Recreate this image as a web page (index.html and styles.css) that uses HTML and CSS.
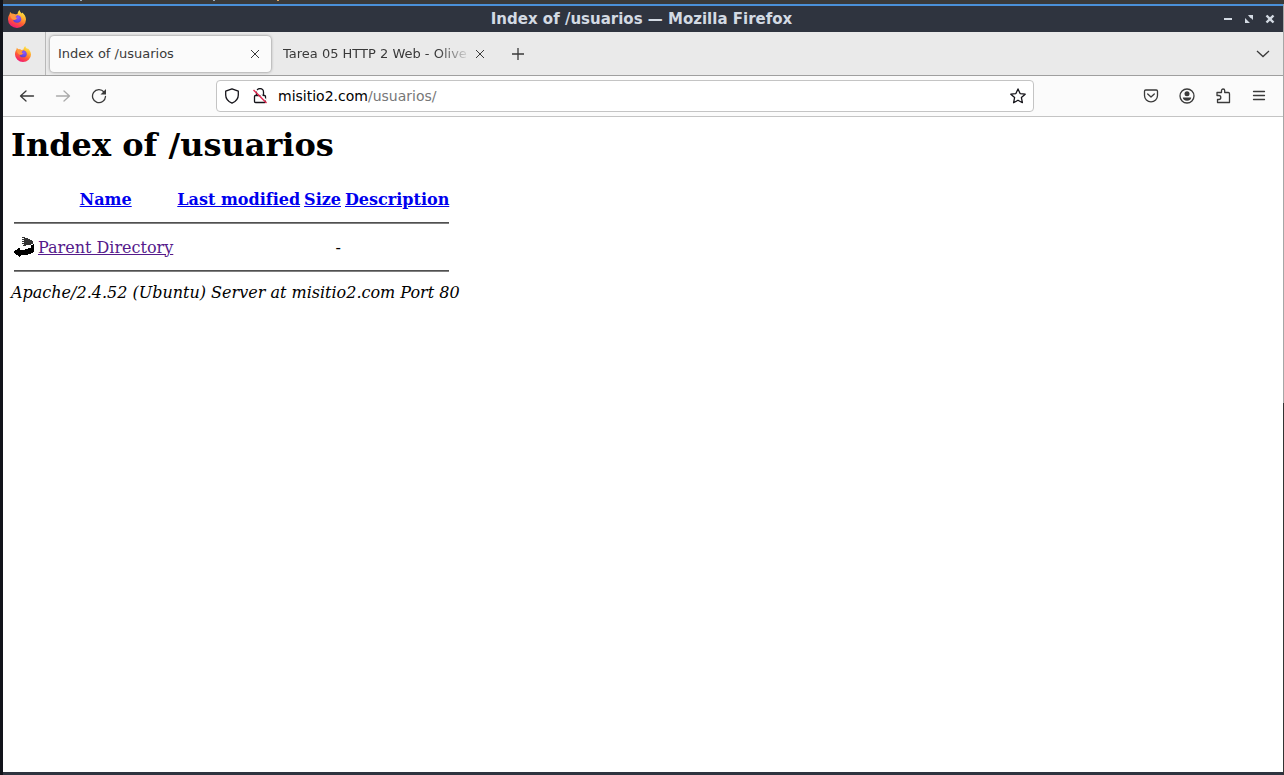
FILE: index.html
```html
<!DOCTYPE html>
<html lang="es">
<head>
<meta charset="utf-8">
<title>Index of /usuarios</title>
<link rel="stylesheet" href="styles.css">
</head>
<body>
<svg width="0" height="0" class="defs" aria-hidden="true">
  <defs>
    <linearGradient id="flame" x1="0.8" y1="0" x2="0.3" y2="1">
      <stop offset="0" stop-color="#fff44f"/><stop offset="0.35" stop-color="#ffb02e"/><stop offset="0.65" stop-color="#ff5a36"/><stop offset="1" stop-color="#f0147a"/>
    </linearGradient>
    <radialGradient id="globe" cx="0.6" cy="0.3" r="0.7">
      <stop offset="0" stop-color="#9059ff"/><stop offset="1" stop-color="#5b3fd0"/>
    </radialGradient>
    <symbol id="firefox" viewBox="0 0 18 18">
      <path fill="url(#flame)" d="M11.6 0c.2 1.600 1.200 2.400 2.200 3.400l.5-.8c2 1.700 3.700 4.200 3.700 7a9 8.400 0 0 1-18 0C0 7.200.6 5.400 1.700 4L2 2l2 1.800c1.200-.3 2.500 0 3.500.8l2-.6c.3-1.700.9-3.100 2.100-4z"/>
      <path fill="url(#globe)" d="M9.200 4.900c2.500.2 4.100 2 4.100 4.300a4.200 4 0 0 1-8.300.3c1 .7 2.300.5 3-.2l1.200-.8c-1-.3-1.800-.6-1.700-1.300 0-.9.7-1.200 1.700-2.300z"/>
      <path fill="#ff9640" d="M1.800 4.200 4 3.900c1.300-.2 2.600.1 3.500.9.800.1 1.400.1 1.800.3-.4.900-1.700 1.100-1.900 1.800.1.700 1 .9 2 .9-.3.900-1.300.9-1.700 1.400-.7.700-2.100.9-3 .3L3 8z"/>
    </symbol>
  </defs>
</svg>
<div class="desktop">
  <div class="window">
    <header class="titlebar">
      <svg class="app-icon" width="18" height="18"><use href="#firefox"/></svg>
      <span class="window-title">Index of /usuarios — Mozilla Firefox</span>
      <div class="window-buttons">
        <button aria-label="Minimize"><svg width="10" height="10" viewBox="0 0 10 10"><path fill="currentColor" d="M1 4h8v2H1z"/></svg></button>
        <button aria-label="Maximize"><svg width="10" height="10" viewBox="0 0 10 10"><path fill="currentColor" d="M4 1h5v5L7.500 4.500 6.500 4 5.500 3zM1 4l5 5H1z"/></svg></button>
        <button aria-label="Close window"><svg width="10" height="10" viewBox="0 0 10 10"><path stroke="currentColor" stroke-width="2.400" d="m1.500 1.500 7 7m0-7-7 7"/></svg></button>
      </div>
    </header>
    <nav class="tabbar" aria-label="Tabs">
      <button class="view" aria-label="Firefox View"><svg width="16" height="16"><use href="#firefox"/></svg></button>
      <div class="tab active">
        <span class="tab-label">Index of /usuarios</span>
        <button class="tab-close" aria-label="Close tab"><svg width="10" height="10" viewBox="0 0 10 10"><path stroke="currentColor" d="m1 1 8 8m0-8-8 8"/></svg></button>
      </div>
      <div class="tab">
        <span class="tab-label fade">Tarea 05 HTTP 2 Web - Olive</span>
        <button class="tab-close" aria-label="Close tab"><svg width="10" height="10" viewBox="0 0 10 10"><path stroke="currentColor" d="m1 1 8 8m0-8-8 8"/></svg></button>
      </div>
      <button class="icon-button new-tab" aria-label="New tab"><svg width="12" height="12" viewBox="0 0 12 12"><path stroke="currentColor" stroke-width="1.300" d="M6 0v12M0 6h12"/></svg></button>
      <button class="icon-button all-tabs" aria-label="List all tabs"><svg width="14" height="8" viewBox="0 0 14 8"><path fill="none" stroke="currentColor" stroke-width="1.300" d="m1 1 6 5.500L13 1"/></svg></button>
    </nav>
    <div class="toolbar">
      <div class="nav-buttons">
        <button class="icon-button" aria-label="Back"><svg width="16" height="16" viewBox="0 0 16 16"><path class="line" d="M14.500 8H1.500M7 3 1.500 8 7 13"/></svg></button>
        <button class="icon-button" aria-label="Forward" disabled><svg width="16" height="16" viewBox="0 0 16 16"><path class="line" d="M1.500 8h13M9 3l5.500 5L9 13"/></svg></button>
        <button class="icon-button" aria-label="Reload"><svg width="16" height="16" viewBox="0 0 16 16"><path class="line" d="M13 4A6.500 6.500 0 1 0 14.500 8.500"/><path fill="currentColor" d="M15 1v5.500H9.500z"/></svg></button>
      </div>
      <div class="urlbar">
        <svg width="16" height="16" viewBox="0 0 16 16"><path class="line" d="M8 .8 14.300 3.200V7c0 3.500-2.500 6.500-6.300 8.200C4.200 13.500 1.700 10.500 1.700 7V3.200z"/></svg>
        <svg class="lock" width="16" height="16" viewBox="0 0 16 16"><path class="line" d="M4.500 7V4a3.500 3.500 0 0 1 7 0V7M3.500 7.500h9a1 1 0 0 1 1 1v5a1 1 0 0 1-1 1h-9a1 1 0 0 1-1-1v-5a1 1 0 0 1 1-1z"/><path stroke="#fff" stroke-width="1.500" d="m3 1 12 12"/><path stroke="#e22850" stroke-width="1.400" d="m1.500 2 13 13"/></svg>
        <label class="address"><span class="address-text" aria-hidden="true">misitio2.com<span class="path">/usuarios/</span></span><input class="address-input" type="text" aria-label="Address"></label>
        <button class="star" aria-label="Bookmark"><svg width="16" height="16" viewBox="0 0 16 16"><path class="line" d="m8 .9 2.100 4.700 5.100.6-3.800 3.400 1 5.100L8 12.200l-4.400 2.500 1-5.100L.8 6.200l5.100-.6z"/></svg></button>
      </div>
      <div class="tools">
        <button class="icon-button" aria-label="Pocket"><svg width="16" height="16" viewBox="0 0 16 16"><path class="line" d="M2.700 2h10.600a1.200 1.200 0 0 1 1.200 1.200V7.500a6.500 6.300 0 0 1-13 0V3.200A1.200 1.200 0 0 1 2.700 2z"/><path class="line" d="M4.700 6 8 9l3.300-3"/></svg></button>
        <button class="icon-button" aria-label="Account"><svg width="16" height="16" viewBox="0 0 16 16"><circle class="line" cx="8" cy="8" r="7"/><circle cx="8" cy="5.800" r="2.500" fill="currentColor"/><path fill="currentColor" d="M3.800 9.500h8.400c0 2-1.700 3.200-4.200 3.200S3.800 11.500 3.800 9.500z"/></svg></button>
        <button class="icon-button" aria-label="Extensions"><svg width="16" height="16" viewBox="0 0 16 16"><path class="line" d="M2 7.500V4.500h4.500V2.600a1.600 1.600 0 0 1 3.200 0v1.900h3.600a1.200 1.200 0 0 1 1.200 1.200v8.800H2.500V11.500h1.300a2 2 0 0 0 0-4z"/></svg></button>
        <button class="icon-button" aria-label="Menu"><svg width="16" height="16" viewBox="0 0 16 16"><path class="line" d="M2.500 3.500h11M2.500 7.500h11M2.500 11.500h11"/></svg></button>
      </div>
    </div>
    <main class="page">
      <h1>Index of /usuarios</h1>
      <table class="listing">
        <tr><th><span class="blank"></span></th><th><a href="#name">Name</a></th><th><a href="#modified">Last modified</a></th><th><a href="#size">Size</a></th><th><a href="#description">Description</a></th></tr>
        <tr><th colspan="5"><hr></th></tr>
        <tr><td><svg class="back-icon" width="20" height="22" viewBox="0 0 20 22" shape-rendering="crispEdges"><path fill="#333" d="M9 1h2v1h3v1h2v1h2v1h1v3h-2v1h-5v1H9V9h1V8H9V7h1V6H9V5h1V4H9V3h1V2H9z"/><path stroke="#333" stroke-dasharray="1 1" d="M8.500 1v8"/><path d="M20 8v8h-1v1h-2v1h-3v1H7v1H6v1H5v-1H4v-1H2v-1H1v-1H0v-2h1v-1h2v-1h1v-1h2v2h5v-1h3v-1h3V9h2V8z"/></svg></td><td><a class="visited" href="#parent">Parent Directory</a></td><td>&nbsp;</td><td class="size">-</td><td>&nbsp;</td></tr>
        <tr><th colspan="5"><hr></th></tr>
      </table>
      <address>Apache/2.4.52 (Ubuntu) Server at misitio2.com Port 80</address>
    </main>
  </div>
</div>
</body>
</html>
```
FILE: styles.css
```css
* { box-sizing: border-box; }
body { margin: 0; font-family: "DejaVu Sans", sans-serif; }
button { padding: 0; border: 0; background: none; color: inherit; font: inherit; display: grid; place-items: center; }
svg { display: block; flex: none; }
.defs { position: absolute; }
.line { fill: none; stroke: currentColor; stroke-width: 1.3; stroke-linejoin: round; stroke-linecap: round; }

.desktop {
  height: 100vh;
  padding: 4px 1px 0 3px;
  background:
    linear-gradient(#9ab, #9ab) 80px 0 / 2px 1px no-repeat,
    linear-gradient(#9ab, #9ab) 213px 0 / 2px 1px no-repeat,
    linear-gradient(#da6, #da6) 277px 0 / 2px 1px no-repeat,
    linear-gradient(#3a3a3a, #3a3a3a) 3px 0 / 100% 4px no-repeat,
    linear-gradient(#a6a6a6 52%, #333 52%) right / 1px 100% no-repeat,
    #11131a;
}
.window { height: 100%; display: flex; flex-direction: column; border-top: 2px solid #4a90d9; border-bottom: 3px solid #2f343f; background: #fff; }

.titlebar { height: 26px; flex: none; display: grid; grid-template-columns: 1fr auto 1fr; align-items: center; padding: 0 8px 0 5px; background: #2f343f; color: #d3dae3; }
.window-title { font-size: 15px; font-weight: 700; }
.window-buttons { display: flex; justify-content: flex-end; gap: 11px; }

.tabbar { height: 44px; flex: none; display: flex; align-items: center; background: #eaeaea; border-bottom: 1px solid #9f9f9f; color: #3a3a3a; font-size: 13px; }
.view { width: 43px; align-self: stretch; padding-right: 2px; border-right: 1px solid #b8b8b8; }
.tab { display: flex; align-items: center; width: 221px; height: 36px; padding: 0 8px; gap: 1px; border-radius: 4px; margin-left: 4px; }
.tab.active { background: #fbfbfb; box-shadow: 0 0 3px #777; }
.tab-label { flex: 1; overflow: hidden; white-space: nowrap; }
.fade { mask-image: linear-gradient(to left, transparent, #000 32px); }
.tab-close { width: 16px; height: 16px; }
.icon-button { width: 36px; height: 32px; }
.new-tab { margin-left: 4px; }
.all-tabs { margin-left: auto; margin-right: 2px; }

.toolbar { height: 41px; flex: none; display: flex; align-items: center; padding: 0 6px; background: #fbfbfb; border-bottom: 1px solid #c4c4c4; color: #3a3a3a; }
.nav-buttons, .tools { display: flex; }
.icon-button:disabled { color: #aaa; }
.urlbar { flex: 0 1 818px; margin: 0 auto; height: 32px; display: flex; align-items: center; padding: 0 7px; border: 1px solid #c4c4c4; border-radius: 4px; background: #fff; color: #15141a; }
.lock { margin: 0 10px 0 12px; }
.address { flex: 1; display: grid; font-size: 14px; color: #000; }
.address-text, .address-input { grid-area: 1 / 1; }
.address-input { width: 100%; border: 0; padding: 0; background: transparent; outline: 0; font: inherit; }
.path { color: #777; }

.page { flex: 1; min-height: 0; overflow: auto; padding: 9px 8px 8px; font-family: "DejaVu Serif", serif; font-size: 16px; color: #000; }
.page h1 { margin: 0 0 21px; font-size: 32px; }
.listing th, .listing td { padding: 1px; }
.listing hr { margin: 8px 0; border: 0; border-top: 1px solid #505050; border-bottom: 1px solid #808080; }
.listing a { color: #00e; }
.listing .visited { color: #551a8b; }
.blank { display: block; width: 20px; height: 22px; }
.size { text-align: right; }
```
